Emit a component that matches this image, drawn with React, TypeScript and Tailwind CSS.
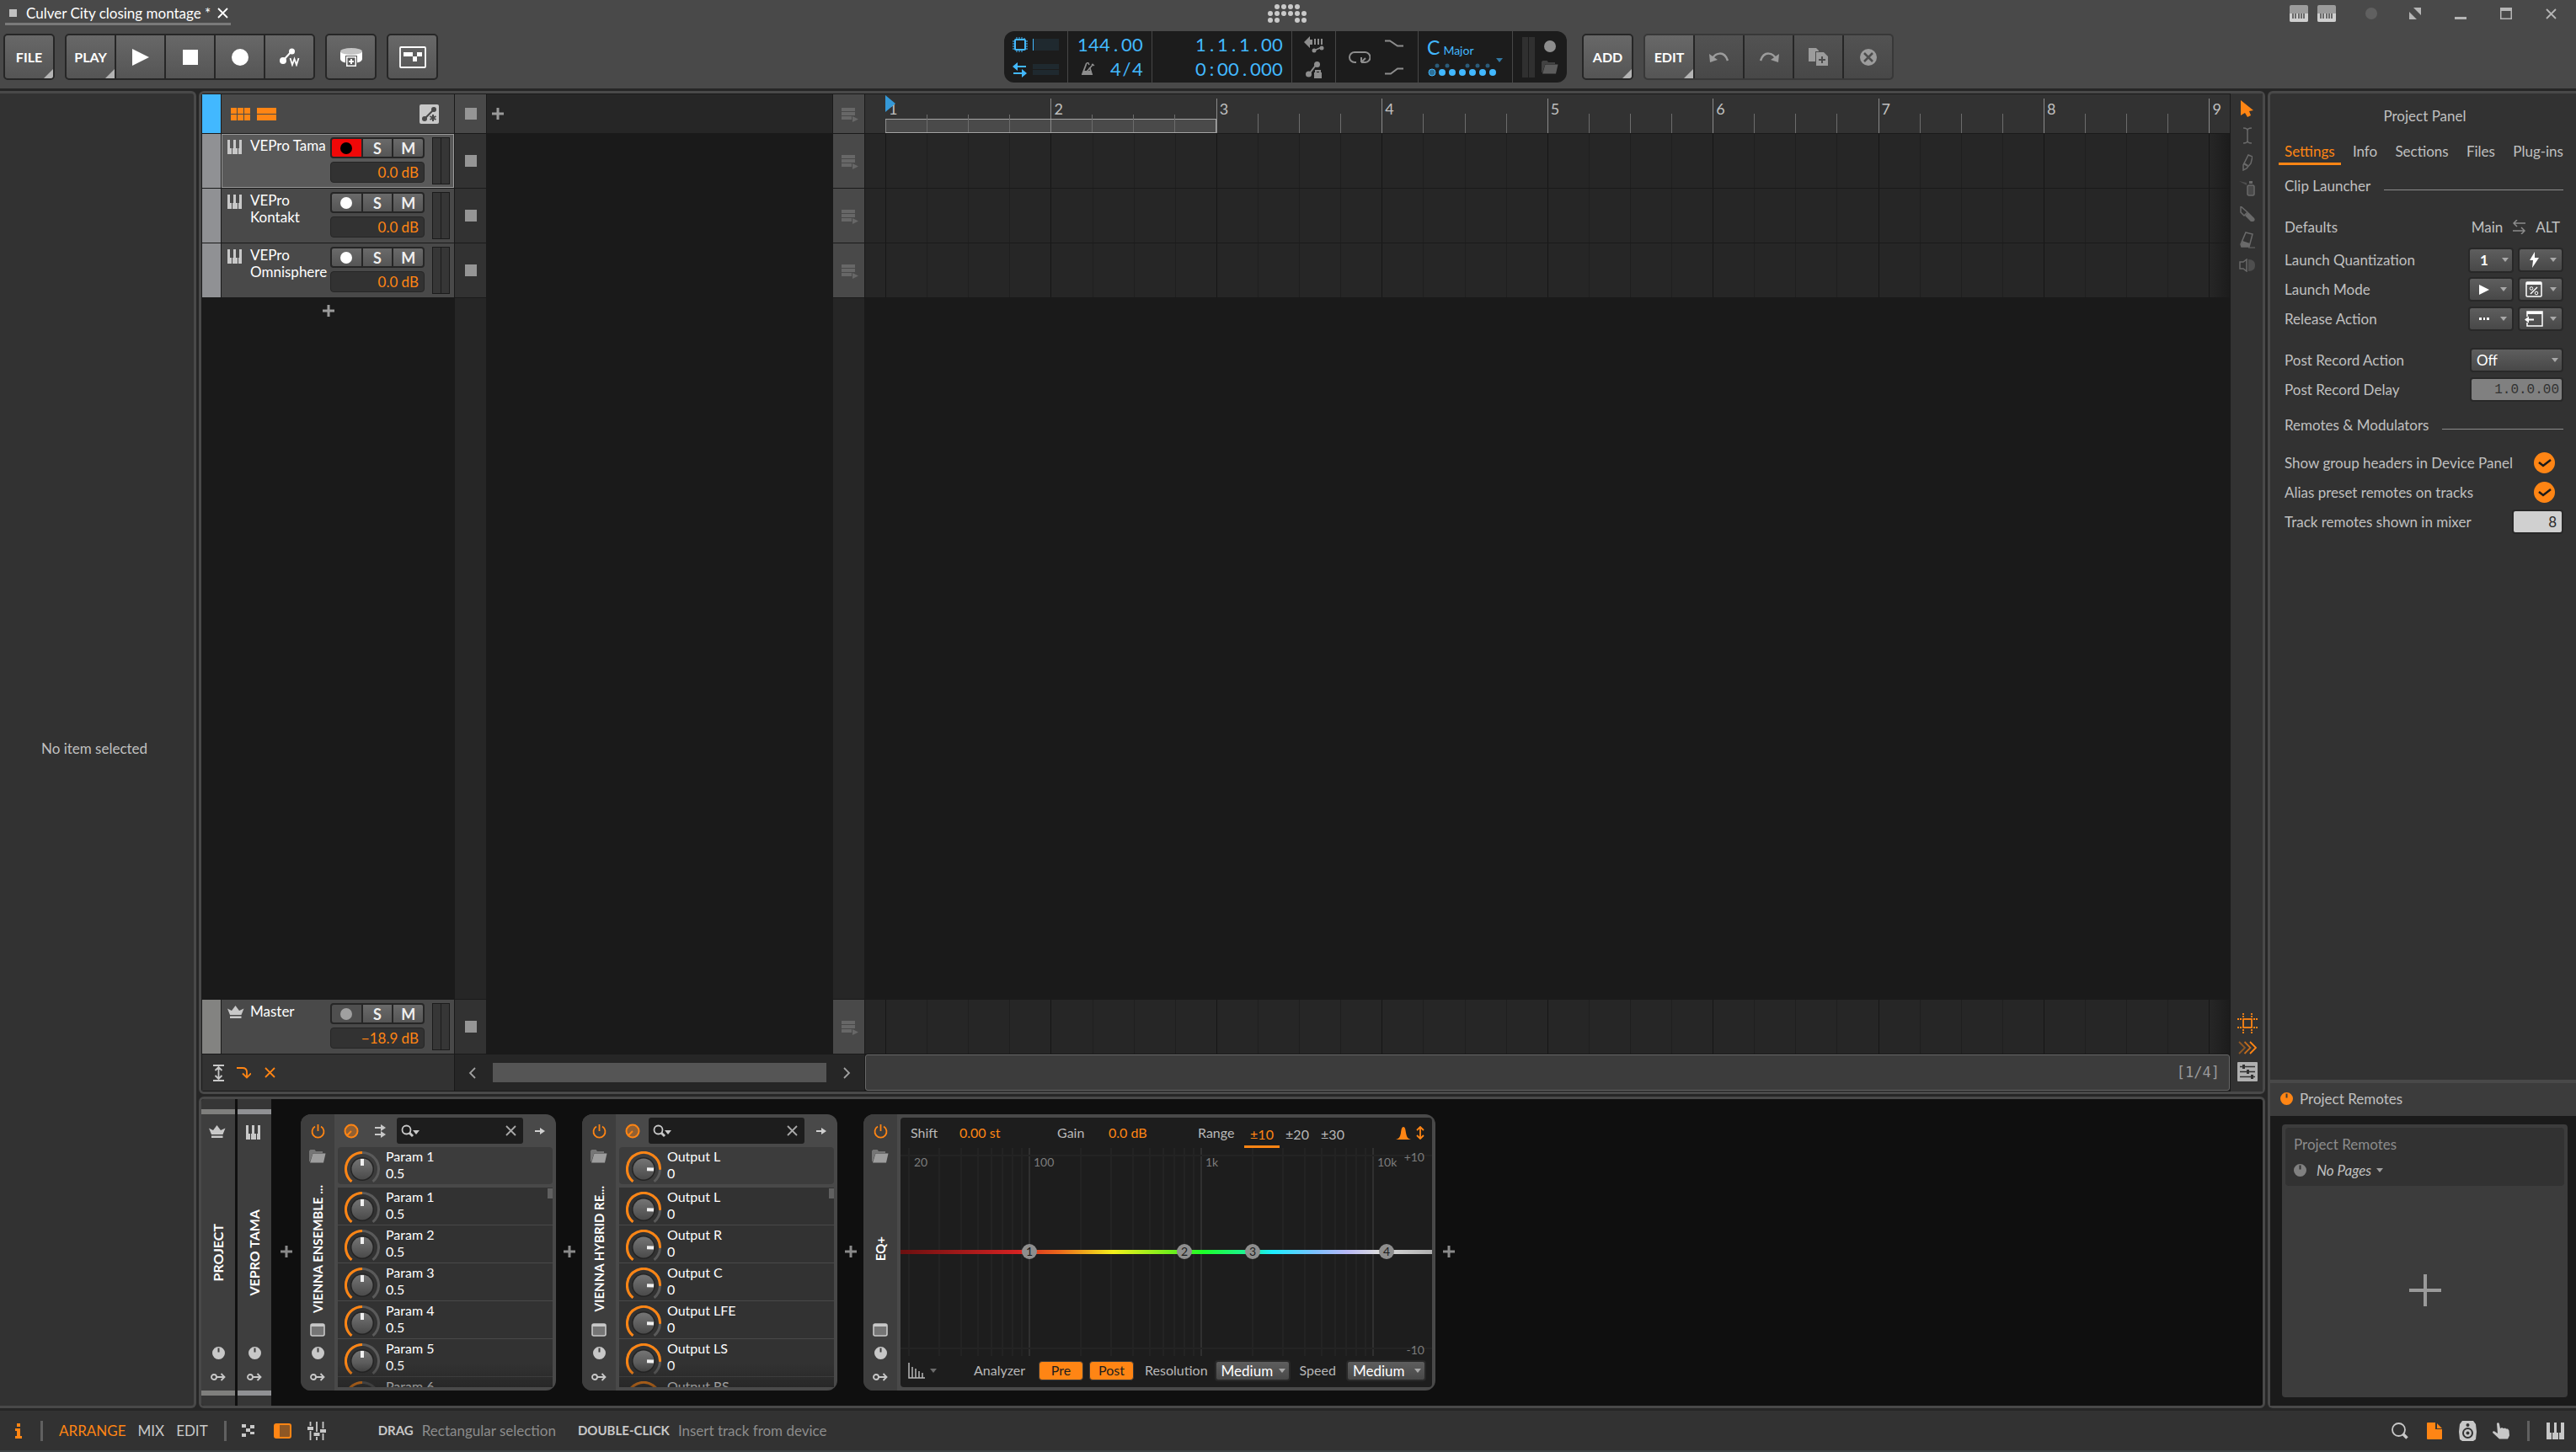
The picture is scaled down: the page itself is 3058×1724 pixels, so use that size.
import { useState } from "react";
import type { ReactNode } from "react";

type IconProps = { className?: string };

function Svg({
  w,
  h,
  className = "",
  children,
}: {
  w: number;
  h: number;
  className?: string;
  children: ReactNode;
}) {
  return (
    <svg
      width={w}
      height={h}
      viewBox={`0 0 ${w} ${h}`}
      fill="currentColor"
      aria-hidden="true"
      className={`shrink-0 ${className}`}
    >
      {children}
    </svg>
  );
}

const PianoIcon = ({ className }: IconProps) => (
  <Svg w={18} h={17} className={className}>
    <path d="M0 0h3v10h2v7H0zM7 0h3v10h2v7H6v-7h1zM14 0h3v17h-4v-7h1z" />
  </Svg>
);

const CrownIcon = ({ className }: IconProps) => (
  <Svg w={20} h={15} className={className}>
    <path d="M0 3.500 5 6l4.500-6L14 6l5.500-2.500L16.500 11H3z" />
    <path d="M3 12.500h13.500V15H3z" />
  </Svg>
);

const DialIcon = ({ className }: IconProps) => (
  <Svg w={15} h={15} className={className}>
    <path
      fillRule="evenodd"
      d="M7.500 0a7.500 7.500 0 1 1 0 15 7.500 7.500 0 0 1 0-15zM6.500 1.500v5h2v-5z"
    />
  </Svg>
);

const RouteIcon = ({ className }: IconProps) => (
  <Svg w={18} h={10} className={className}>
    <g fill="none" stroke="currentColor" strokeWidth="1.800">
      <circle cx="4" cy="5" r="3" />
      <path d="M7 5h10M12.500 1l4 4-4 4" />
    </g>
  </Svg>
);

const PowerIcon = ({ className }: IconProps) => (
  <Svg w={17} h={18} className={className}>
    <path
      d="M8.500 1v8M5 3.500a7 7 0 1 0 7 0"
      fill="none"
      stroke="currentColor"
      strokeWidth="1.800"
    />
  </Svg>
);

const FolderIcon = ({ className }: IconProps) => (
  <Svg w={20} h={16} className={className}>
    <path d="M0 1.500 1.500 0h5L8 2h8v2H4.500L1 14H0z" opacity="0.600" />
    <path d="M4.500 4.500h15L17 15.500H1z" />
  </Svg>
);

const WindowIcon = ({ className }: IconProps) => (
  <Svg w={18} h={16} className={className}>
    <rect x="1" y="1" width="16" height="14" rx="2" fillOpacity="0.400" stroke="currentColor" strokeWidth="1.600" />
    <path d="M1 1h16v3H1z" />
  </Svg>
);

const PlusIcon = ({ className }: IconProps) => (
  <Svg w={14} h={14} className={className}>
    <path d="M5.500 0h3v5.500H14v3H8.500V14h-3V8.500H0v-3h5.500z" />
  </Svg>
);

const CloseIcon = ({ className }: IconProps) => (
  <Svg w={13} h={13} className={className}>
    <path d="M1 1l11 11M12 1L1 12" fill="none" stroke="currentColor" strokeWidth="1.800" />
  </Svg>
);

const CaretIcon = ({ className }: IconProps) => (
  <Svg w={8} h={5} className={className}>
    <path d="M0 0h8L4 5z" />
  </Svg>
);

const ChipIcon = () => (
  <Svg w={18} h={18} className="text-[#42b8ff]">
    <rect x="3" y="3" width="12" height="12" rx="1" fill="none" stroke="currentColor" strokeWidth="2" />
    <path
      d="M5 0v3M8 0v3M11 0v3M14 1v2M5 15v3M8 15v3M11 15v3M0 5h3M0 8h3M0 11h3M0 14h3M15 5h3M15 8h3M15 11h3M15 14h3"
      stroke="currentColor"
      strokeWidth="1"
    />
  </Svg>
);

const SwapIcon = () => (
  <Svg w={17} h={18} className="text-[#42b8ff]">
    <path d="M0 5l6-5v4h10v2H6v4zM17 13l-6-5v4H1v2h10v4z" />
  </Svg>
);

const ListPlayIcon = () => (
  <Svg w={20} h={17} className="text-[#676767]">
    <path d="M0 0h16v4H0zM0 5h16v4H0zM0 10h12v4H0zM13 10l7 3.500-7 3.500z" />
  </Svg>
);

const SearchCaret = () => (
  <Svg w={22} h={16} className="text-[#c8c8c8]">
    <circle cx="6.500" cy="6.500" r="5" fill="none" stroke="currentColor" strokeWidth="1.800" />
    <path d="M10 10l4 4" stroke="currentColor" strokeWidth="3" />
    <path d="M14 7h8l-4 5z" />
  </Svg>
);

// ---------- title bar + transport ----------

function BrandDots() {
  const rows = [
    [1, 2, 3, 4],
    [0, 1, 2, 3, 4, 5],
    [0, 1, 4, 5],
  ];
  return (
    <Svg w={48} h={24} className="text-[#c9c9c9]">
      {rows.map((cols, y) =>
        cols.map((x) => <circle key={`${x}-${y}`} cx={4 + x * 8} cy={4 + y * 8} r="3" />)
      )}
    </Svg>
  );
}

function TitleBar() {
  return (
    <div className="grid h-[37px] grid-cols-[1fr_auto_1fr] items-start pr-0.5">
      <div className="ml-1.5 flex h-[30px] w-[268px] items-center border-b-[3px] border-[#7a7a7a] pl-[5px] pt-1 text-white">
        <span className="mr-[11px] size-[9px] bg-[#c0c0c0]" />
        <span className="text-[17px]">Culver City closing montage *</span>
        <button aria-label="Close project" className="ml-auto mr-[3px]">
          <CloseIcon />
        </button>
      </div>
      <div className="pt-1">
        <BrandDots />
      </div>
      <div className="flex h-8 items-center justify-end pr-[21px] text-[#b5b5b5]">
        {[0, 1].map((i) => (
          <Svg key={i} w={22} h={20} className="mr-[11px]">
            <rect width="22" height="20" rx="2" fill="#9b9b9b" />
            <path d="M0 10h22v8a2 2 0 0 1-2 2H2a2 2 0 0 1-2-2z" fill="#cfcfcf" />
            <path d="M4 10v6M7 10v6M11 10v6M14 10v6M17 10v6" stroke="#4a4a4a" strokeWidth="1.500" />
          </Svg>
        ))}
        <span className="ml-6 mr-[38px] size-[14px] rounded-full bg-[#606060]" />
        <button aria-label="Full screen" className="mr-10">
          <Svg w={14} h={14}>
            <path d="M5 0h9v9zM0 5v9h9z" />
          </Svg>
        </button>
        <button aria-label="Minimize" className="mr-10">
          <Svg w={14} h={14}>
            <path d="M0 11h14v3H0z" />
          </Svg>
        </button>
        <button aria-label="Maximize" className="mr-10">
          <Svg w={14} h={14}>
            <path fillRule="evenodd" d="M0 0h14v14H0zM1.500 4v8.500h11V4z" />
          </Svg>
        </button>
        <button aria-label="Close window">
          <CloseIcon />
        </button>
      </div>
    </div>
  );
}

function ToolGroup({ children, dim }: { children: ReactNode; dim?: boolean }) {
  return (
    <div
      className={`flex h-[55px] overflow-hidden rounded-[5px] border-2 bg-[#262626] ${
        dim ? "border-[#383838]" : "border-[#262626]"
      }`}
    >
      {children}
    </div>
  );
}

function ToolButton({
  label,
  text,
  dim,
  children,
}: {
  label: string;
  text?: boolean;
  dim?: boolean;
  children?: ReactNode;
}) {
  return (
    <button
      aria-label={label}
      className={`relative mr-0.5 flex w-[57px] items-center justify-center text-[16px] font-bold last:mr-0 ${
        dim
          ? "bg-linear-to-b from-[#525252] to-[#484848] text-[#9c9c9c]"
          : "bg-linear-to-b from-[#686868] to-[#555555] text-white"
      }`}
    >
      {text ? label : children}
      {text && (
        <Svg w={11} h={11} className="absolute bottom-0 right-0 text-[#b4b4b4]">
          <path d="M11 0v11H0z" />
        </Svg>
      )}
    </button>
  );
}

// every character sits in a cell of the same width, like a counter
function Digits({ value }: { value: string }) {
  return (
    <div className="flex h-[29px] items-center justify-end text-[22px] leading-none">
      {value.split("").map((c, i) => (
        <span key={i} className="w-[13px] text-center">
          {c}
        </span>
      ))}
    </div>
  );
}

function TransportDisplay() {
  return (
    <div className="flex h-[61px] overflow-hidden rounded-[12px] bg-[#1c1c1c] text-[#42b8ff]">
      <div className="grid w-[76px] grid-cols-[18px_31px] content-center items-center gap-x-1.5 gap-y-3 border-r border-[#464646] pl-[10px]">
        <ChipIcon />
        <div className="h-[14px] border-l border-[#42b8ff] bg-[#1f292f]" />
        <SwapIcon />
        <div>
          <div className="h-1.5 bg-[#1f292f]" />
          <div className="mt-px h-1.5 bg-[#1f292f]" />
        </div>
      </div>
      <div className="w-[100px] border-r border-[#464646] pr-[10px] pt-px">
        <Digits value="144.00" />
        <div className="flex items-center justify-between pl-4">
          <Svg w={16} h={16} className="text-[#8d8d8d]">
            <path d="M5.500 2 1 14h11L9.500 6" fill="none" stroke="currentColor" strokeWidth="1.800" />
            <path d="M2 10h9.500l1 5H.500z" />
            <path d="M5 2l2.500-2L9 3M6 11l8-9M12 2l3 2" fill="none" stroke="currentColor" strokeWidth="1.500" />
          </Svg>
          <Digits value="4/4" />
        </div>
      </div>
      <div className="w-[166px] border-r border-[#464646] pr-[10px] pt-px">
        <Digits value="1.1.1.00" />
        <Digits value="0:00.000" />
      </div>
      <div className="flex w-[52px] flex-col items-center justify-center gap-[10px] border-r border-[#464646] text-[#8d8d8d]">
        <Svg w={24} h={20}>
          <path d="M0 7l7-7v4h3v6H7v4zM12 3h2v7h-2zM16 3h2v7h-2zM20 3h2v7h-2z" />
          <path d="M12 17l9-4" stroke="currentColor" strokeWidth="1.500" />
          <circle cx="12" cy="17" r="2.500" />
          <circle cx="21" cy="14" r="2.500" />
        </Svg>
        <Svg w={20} h={20}>
          <path d="M4 15L13 3" stroke="currentColor" strokeWidth="2" />
          <circle cx="3.500" cy="15" r="3.500" />
          <circle cx="13.500" cy="3.500" r="3.500" />
          <path fillRule="evenodd" d="M10 13h1v-3h7v3h1v7h-9zM13 12v1h3v-1z" />
        </Svg>
      </div>
      <div className="flex w-[98px] items-center gap-[17px] border-r border-[#464646] pl-[15px] text-[#8d8d8d]">
        <Svg w={26} h={16}>
          <path
            d="M9 14H7A6 6 0 0 1 7 2h12a6 6 0 0 1 1 12h-5M15 14l5-5M15 14V8"
            fill="none"
            stroke="currentColor"
            strokeWidth="2"
          />
        </Svg>
        <div className="flex flex-col gap-6">
          <Svg w={22} h={9}>
            <path d="M0 1.500h6l9 6h7" fill="none" stroke="currentColor" strokeWidth="2" />
          </Svg>
          <Svg w={22} h={9}>
            <path d="M0 7.500h7l8-6h7" fill="none" stroke="currentColor" strokeWidth="2" />
          </Svg>
        </div>
      </div>
      <div className="w-[112px] border-r border-[#464646] pl-[10px] pt-0.5">
        <div className="flex h-7 items-baseline gap-1">
          <span className="text-[23px]">C</span>
          <span className="text-[14px]">Major</span>
        </div>
        <Svg w={92} h={26}>
          <path d="M82 2h8l-4 5z" opacity="0.600" />
          {[12, 24, 48, 60, 72].map((x) => (
            <circle key={x} cx={x} cy="11" r="2.500" fill="#2b5b78" />
          ))}
          <circle cx="6" cy="19" r="4" fill="#2d7098" stroke="#42b8ff" />
          {[18, 30, 42, 54, 66, 78].map((x) => (
            <circle key={x} cx={x} cy="19" r="4" />
          ))}
        </Svg>
      </div>
      <div className="flex w-[64px] items-center pl-[11px]">
        <div className="mr-px h-12 w-[7px] bg-[#303030]" />
        <div className="mr-2 h-12 w-[7px] bg-[#303030]" />
        <div className="flex flex-col items-center gap-[10px]">
          <span className="size-[14px] rounded-full bg-[#8d8d8d]" />
          <FolderIcon className="text-[#5c5c5c]" />
        </div>
      </div>
    </div>
  );
}

function Toolbar() {
  return (
    <div className="grid h-[61px] grid-cols-[1fr_auto_1fr] items-center pr-1.5">
      <div className="flex gap-3 pl-1">
        <ToolGroup>
          <ToolButton label="FILE" text />
        </ToolGroup>
        <ToolGroup>
          <ToolButton label="PLAY" text />
          <ToolButton label="Start">
            <Svg w={20} h={20}>
              <path d="M0 0l20 10L0 20z" />
            </Svg>
          </ToolButton>
          <ToolButton label="Stop">
            <span className="size-[18px] bg-white" />
          </ToolButton>
          <ToolButton label="Record">
            <span className="size-5 rounded-full bg-white" />
          </ToolButton>
          <ToolButton label="Write automation">
            <Svg w={24} h={22}>
              <path d="M4 15L14 4" stroke="currentColor" strokeWidth="2" />
              <circle cx="4" cy="15" r="4" />
              <circle cx="14.500" cy="4" r="3.500" />
              <path
                d="M12.500 12l2.500 8 2.500-7 2.500 7 2.500-8"
                fill="none"
                stroke="currentColor"
                strokeWidth="1.800"
              />
            </Svg>
          </ToolButton>
        </ToolGroup>
        <ToolGroup>
          <ToolButton label="Add to library">
            <Svg w={26} h={22}>
              <path d="M0 5v8c0 3 5 5 13 5s13-2 13-5V5z" />
              <ellipse cx="13" cy="4" rx="13" ry="4" fill="#c4c4c4" />
              <path d="M6 9h14v13H6z" fill="#5a5a5a" />
              <path fillRule="evenodd" d="M7 10h12v12H7zM8.500 11.500v9h9v-9z" />
              <path d="M12 13h2v2h2v2h-2v2h-2v-2h-2v-2h2z" />
            </Svg>
          </ToolButton>
        </ToolGroup>
        <ToolGroup>
          <ToolButton label="Patterns">
            <Svg w={32} h={26}>
              <rect x="1" y="1" width="30" height="24" rx="1" fill="none" stroke="currentColor" strokeWidth="1.800" />
              <path d="M5 7h11v5H5zM16 12h5v6h-5zM21 7h6v5h-6z" />
            </Svg>
          </ToolButton>
        </ToolGroup>
      </div>
      <TransportDisplay />
      <div className="flex gap-3 pl-[18px]">
        <ToolGroup>
          <ToolButton label="ADD" text />
        </ToolGroup>
        <ToolGroup dim>
          <ToolButton label="EDIT" text />
          <ToolButton label="Undo" dim>
            <Svg w={24} h={14}>
              <path d="M3 10C7 1 18-1 22 11" fill="none" stroke="currentColor" strokeWidth="2.500" />
              <path d="M0 3l1 10 9-3z" />
            </Svg>
          </ToolButton>
          <ToolButton label="Redo" dim>
            <Svg w={24} h={14}>
              <path d="M21 10C17 1 6-1 2 11" fill="none" stroke="currentColor" strokeWidth="2.500" />
              <path d="M24 3l-1 10-9-3z" />
            </Svg>
          </ToolButton>
          <ToolButton label="Duplicate" dim>
            <Svg w={23} h={21}>
              <path d="M0 0h9l3 3v1H8v12H0z" />
              <path fillRule="evenodd" d="M9 5h9l5 5v11H9zM15 10v3h-3v2h3v3h2v-3h3v-2h-3v-3z" />
            </Svg>
          </ToolButton>
          <ToolButton label="Delete" dim>
            <Svg w={20} h={20}>
              <circle cx="10" cy="10" r="10" />
              <path d="M5 5l10 10M15 5L5 15" stroke="#4d4d4d" strokeWidth="2.500" />
            </Svg>
          </ToolButton>
        </ToolGroup>
      </div>
    </div>
  );
}

// ---------- arranger ----------

type Track = { name: string; volume: string; armed?: boolean; selected?: boolean; master?: boolean };

const tracks: Track[] = [
  { name: "VEPro Tama", volume: "0.0 dB", armed: true, selected: true },
  { name: "VEPro Kontakt", volume: "0.0 dB" },
  { name: "VEPro Omnisphere", volume: "0.0 dB" },
];

const masterTrack: Track = { name: "Master", volume: "−18.9 dB", master: true };

function TrackHeader({ track }: { track: Track }) {
  const [armed, setArmed] = useState(!!track.armed);
  return (
    <div className="flex h-16 gap-px">
      <div className={`w-[22px] ${track.master ? "bg-[#838381]" : "bg-[#909194]"}`} />
      <div
        className={`flex flex-1 items-start border ${
          track.selected ? "border-[#9a9a9a] bg-[#595959]" : "border-[#494949] bg-[#494949]"
        }`}
      >
        <div className="flex w-[33px] pl-1.5 pt-1.5 text-[#c8c8c8]">
          {track.master ? <CrownIcon /> : <PianoIcon />}
        </div>
        <div className="w-[95px] whitespace-normal pt-[3px] text-[17px] leading-5 text-white">{track.name}</div>
        <div className="w-[112px] pt-[3px]">
          <div className="flex h-[25px] gap-0.5 rounded-[4px] border-2 border-[#262626] bg-[#262626] text-[18px] leading-none font-bold text-[#f0f0f0]">
            <button
              aria-label={`Arm ${track.name}`}
              onClick={() => setArmed(!armed)}
              className={`flex flex-1 items-center justify-center rounded-l-[2px] ${
                armed ? "bg-[#f00808]" : track.master ? "bg-[#4f4f4f]" : "bg-linear-to-b from-[#6a6a6a] to-[#555555]"
              }`}
            >
              <span
                className={`size-[14px] rounded-full ${
                  armed ? "bg-black" : track.master ? "bg-[#a0a0a0]" : "bg-white"
                }`}
              />
            </button>
            <button className="flex flex-1 items-center justify-center bg-linear-to-b from-[#6a6a6a] to-[#555555]">
              S
            </button>
            <button className="flex flex-1 items-center justify-center rounded-r-[2px] bg-linear-to-b from-[#6a6a6a] to-[#555555]">
              M
            </button>
          </div>
          <div className="mt-1 flex h-[25px] items-center justify-end rounded-[4px] border border-[#262626] bg-[#323232] pr-1.5 text-[17px] leading-none text-[#ff8514]">
            {track.volume}
          </div>
        </div>
        <div className="ml-[9px] mt-[3px] flex h-14 gap-px border border-[#1b1b1b] bg-[#1b1b1b]">
          <div className="w-[9px] bg-[#363636]" />
          <div className="w-[9px] bg-[#363636]" />
        </div>
      </div>
    </div>
  );
}

function StopCell({ header }: { header?: boolean }) {
  return (
    <button
      aria-label="Stop clips"
      className={`flex items-center justify-center ${header ? "h-[46px] bg-[#494949]" : "h-16 bg-[#323232]"}`}
    >
      <span className="size-[14px] bg-[#959595]" />
    </button>
  );
}

function SwitchCell({ header }: { header?: boolean }) {
  return (
    <button
      aria-label="Switch playback to arranger"
      className={`flex items-center justify-center bg-[#494949] pl-0.5 pt-0.5 ${header ? "h-[46px]" : "h-16"}`}
    >
      <ListPlayIcon />
    </button>
  );
}

const bars = [1, 2, 3, 4, 5, 6, 7, 8, 9];

function Ruler() {
  return (
    <div className="flex h-[46px] bg-[#323232]">
      <div className="w-6" />
      <div className="grid flex-1 grid-cols-[repeat(8,8fr)_1fr]">
        {bars.map((bar) => (
          <div key={bar} className="relative flex min-w-0 flex-col">
            <div
              className={`mt-[5px] h-6 border-l pl-[3px] pt-px text-[18px] leading-[22px] ${
                bar === 1 ? "border-transparent" : "border-[#8a8a8a]"
              } text-[#c0c0c0]`}
            >
              {bar}
            </div>
            {bar < 9 ? (
              <div
                className={`flex flex-1 ${bar < 3 ? "border-y border-[#a5a5a5] bg-[#4a4a4a]" : ""} ${
                  bar === 2 ? "border-r" : ""
                }`}
              >
                <div className="flex-1 border-l border-[#8a8a8a]" />
                <div className="-mt-1.5 flex-1 border-l border-[#6c6c6c]" />
                <div className="-mt-1.5 flex-1 border-l border-[#6c6c6c]" />
                <div className="-mt-1.5 flex-1 border-l border-[#6c6c6c]" />
              </div>
            ) : (
              <div className="flex-1 border-l border-[#8a8a8a]" />
            )}
            {bar === 1 && (
              <Svg w={12} h={20} className="absolute left-0 top-px text-[#3599d8]">
                <path d="M0 0l12 10L0 20z" />
              </Svg>
            )}
          </div>
        ))}
      </div>
    </div>
  );
}

function TimelineRow() {
  return (
    <div className="flex h-16 bg-[#262626]">
      <div className="w-6" />
      <div className="grid flex-1 grid-cols-[repeat(8,8fr)_1fr]">
        {bars.map((bar) =>
          bar === 9 ? (
            <div key={bar} className="border-l border-[#161616] bg-linear-to-r from-[#262626] to-[#1c1c1c]" />
          ) : (
            <div key={bar} className="flex">
              <div className="flex-1 border-l border-[#161616]" />
              <div className="flex-1 border-l border-[#1f1f1f]" />
              <div className="flex-1 border-l border-[#1f1f1f]" />
              <div className="flex-1 border-l border-[#1f1f1f]" />
            </div>
          )
        )}
      </div>
    </div>
  );
}

function ToolPalette() {
  return (
    <div className="flex w-[38px] flex-col items-center justify-between bg-[#323232] pb-3 pl-px pt-2 text-[#6a6a6a]">
      <div className="flex flex-col items-center gap-3">
        <Svg w={15} h={20} className="text-[#ff8514]">
          <path d="M0 0l15 12-5 1 2 5-4 2-3-5-5 3z" />
        </Svg>
        <Svg w={10} h={20}>
          <path
            d="M0 1c3 0 5 1 5 3 0-2 2-3 5-3M5 4v12M0 19c3 0 5-1 5-3 0 2 2 3 5 3"
            fill="none"
            stroke="currentColor"
            strokeWidth="1.500"
          />
        </Svg>
        <Svg w={12} h={20}>
          <path d="M7 1l5 2-2 8-5 6-4 2V13z" fill="none" stroke="currentColor" strokeWidth="1.500" />
          <path d="M1 12l5 3 1-2-5-3z" />
        </Svg>
        <Svg w={20} h={18}>
          <path d="M0 0l9 2v3z" opacity="0.500" />
          <path d="M12 0h4v3h-4z" />
          <rect x="10" y="5" width="8" height="12" rx="2" fill="#4a4a4a" stroke="currentColor" strokeWidth="1.500" />
        </Svg>
        <Svg w={18} h={18}>
          <path d="M1 0l8 7-4 4-4-4z" fill="none" stroke="currentColor" strokeWidth="1.500" />
          <path d="M6 11l4-4 7 7c2 3-1 5-4 4z" />
        </Svg>
        <Svg w={18} h={20}>
          <path d="M7 1l8 2-4 15H2l-1-3z" fill="none" stroke="currentColor" strokeWidth="1.500" />
          <path d="M3 11l9 3-1 4H1z" />
          <path d="M10 19h8" stroke="currentColor" />
        </Svg>
        <Svg w={20} h={16}>
          <path d="M1 4h4l4-3v14l-4-3H1z" fill="none" stroke="currentColor" strokeWidth="1.500" />
          <path d="M11 1c6 0 8 3 8 7s-2 7-8 7z" opacity="0.500" />
        </Svg>
      </div>
      <div className="flex flex-col items-center gap-[9px] text-[#ff8514]">
        <Svg w={24} h={24}>
          <rect x="7" y="7" width="10" height="10" fill="none" stroke="currentColor" strokeWidth="1.800" />
          <path
            d="M7 5V0M17 5V0M7 19v5M17 19v5M5 7H0M5 17H0M19 7h5M19 17h5"
            stroke="currentColor"
            strokeWidth="1.800"
            strokeDasharray="2 1"
          />
        </Svg>
        <Svg w={22} h={16}>
          <g fill="none" stroke="currentColor" strokeWidth="1.800">
            <path d="M1 1l7 7-7 7" opacity="0.450" />
            <path d="M7.500 1l7 7-7 7" opacity="0.700" />
            <path d="M14 1l7 7-7 7" />
          </g>
        </Svg>
        <Svg w={24} h={23} className="text-[#b0b0b0]">
          <rect width="24" height="23" rx="1" />
          <path d="M3 5.500h18M3 11.500h18M3 17.500h18" stroke="#323232" strokeWidth="1.500" />
          <path d="M6 3h3v5H6zM11 9h3v5h-3zM16 15h3v5h-3z" fill="#323232" />
        </Svg>
      </div>
    </div>
  );
}

function Arranger() {
  return (
    <section className="flex min-h-0 flex-1 rounded-[6px] border-[3px] border-[#494949] bg-[#1a1a1a] pl-px">
      <div className="flex min-w-0 flex-1 flex-col gap-px py-px pr-px">
        <div className="flex min-h-0 flex-1 gap-px">
          <div className="flex w-[299px] flex-col gap-px">
            <div className="flex h-[46px] gap-px">
              <div className="w-[22px] bg-[#42b8ff]" />
              <div className="flex flex-1 items-center gap-2 bg-[#494949] pl-[11px] pr-[18px]">
                <button aria-label="Show clip launcher" className="text-[#ff8514]">
                  <Svg w={23} h={15}>
                    <path d="M0 0h7v7H0zM8 0h7v7H8zM16 0h7v7h-7zM0 8h7v7H0zM8 8h7v7H8zM16 8h7v7h-7z" />
                  </Svg>
                </button>
                <button aria-label="Show arranger timeline" className="text-[#ff8514]">
                  <Svg w={23} h={15}>
                    <path d="M0 0h23v7H0zM0 8h23v7H0z" />
                  </Svg>
                </button>
                <button aria-label="Automation override" className="ml-auto text-[#c8c8c8]">
                  <Svg w={23} h={23}>
                    <rect width="23" height="23" rx="2" />
                    <g stroke="#494949" strokeWidth="2">
                      <path d="M6 17L17 6M16 12v8M12.500 14l7 4M19.500 14l-7 4" />
                    </g>
                    <circle cx="6" cy="17" r="3" fill="#494949" />
                    <circle cx="17" cy="6" r="3" fill="#494949" />
                  </Svg>
                </button>
              </div>
            </div>
            {tracks.map((track) => (
              <TrackHeader key={track.name} track={track} />
            ))}
            <div className="flex flex-1 items-start justify-center pt-2">
              <button aria-label="Add track" className="text-[#9a9a9a]">
                <PlusIcon />
              </button>
            </div>
            <TrackHeader track={masterTrack} />
          </div>

          <div className="flex w-[37px] flex-col gap-px">
            <StopCell header />
            {tracks.map((track) => (
              <StopCell key={track.name} />
            ))}
            <div className="flex-1 bg-[#262626]" />
            <StopCell />
          </div>

          <div className="w-[410px]">
            <div className="flex h-[46px] items-center bg-[#262626] pl-1.5 text-[#9a9a9a]">
              <button aria-label="Add scene">
                <PlusIcon />
              </button>
            </div>
          </div>

          <div className="flex w-[37px] flex-col gap-px">
            <SwitchCell header />
            {tracks.map((track) => (
              <SwitchCell key={track.name} />
            ))}
            <div className="flex-1 bg-[#262626]" />
            <SwitchCell />
          </div>

          <div className="flex min-w-0 flex-1 flex-col gap-px">
            <Ruler />
            {tracks.map((track) => (
              <TimelineRow key={track.name} />
            ))}
            <div className="flex-1" />
            <TimelineRow />
          </div>
        </div>

        <div className="flex h-[43px] gap-px">
          <div className="flex w-[299px] items-center gap-3.5 bg-[#323232] pl-3 text-[#ff8514]">
            <Svg w={15} h={20} className="text-[#c8c8c8]">
              <path
                d="M1 1h13M1 19h13M7.500 3v14M3.500 7l4-4 4 4M3.500 13l4 4 4-4"
                fill="none"
                stroke="currentColor"
                strokeWidth="1.800"
              />
            </Svg>
            <Svg w={17} h={15}>
              <path d="M0 2h7c3 0 5 1 5 5v6M7 8.500l5 5 5-5" fill="none" stroke="currentColor" strokeWidth="1.800" />
            </Svg>
            <CloseIcon className="ml-0.5" />
          </div>
          <div className="flex w-[486px] items-center bg-[#262626] px-4 text-[#a0a0a0]">
            <Svg w={9} h={14}>
              <path d="M8 1L2 7l6 6" fill="none" stroke="currentColor" strokeWidth="1.800" />
            </Svg>
            <div className="mx-5 h-[23px] flex-1 bg-[#555555]" />
            <Svg w={9} h={14}>
              <path d="M1 1l6 6-6 6" fill="none" stroke="currentColor" strokeWidth="1.800" />
            </Svg>
          </div>
          <div className="flex flex-1 items-center justify-end rounded-[3px] border border-[#686868] bg-[#3c3c3c] pr-[11px] font-['DejaVu_Sans_Mono',monospace] text-[17px] text-[#9a9a9a]">
            [1/4]
          </div>
        </div>
      </div>
      <ToolPalette />
    </section>
  );
}

// ---------- device panel ----------

function ChainColumn({ label, icon, strip }: { label: string; icon: ReactNode; strip: string }) {
  return (
    <div className="flex w-10 flex-col bg-[#363636] py-3">
      <div className={`h-1.5 ${strip}`} />
      <div className="flex flex-1 flex-col items-center bg-[#3e3e3e] text-[#c8c8c8]">
        <div className="flex h-[60px] items-start pr-0.5 pt-[13px]">{icon}</div>
        <div className="flex flex-1 items-center">
          <span className="rotate-180 text-[16px] leading-5 font-bold text-white [writing-mode:vertical-rl]">
            {label}
          </span>
        </div>
        <div className="flex h-[60px] flex-col items-center gap-4 pt-2">
          <DialIcon />
          <RouteIcon />
        </div>
      </div>
      <div className={`h-1.5 ${strip}`} />
    </div>
  );
}

function DevicePlus({ wide }: { wide?: boolean }) {
  return (
    <button
      aria-label="Add device"
      className={`flex h-[328px] items-center justify-center pb-0.5 text-[#8a8a8a] ${wide ? "w-[35px]" : "w-[31px]"}`}
    >
      <PlusIcon />
    </button>
  );
}

function DeviceFrame({ name, className, children }: { name: string; className: string; children: ReactNode }) {
  return (
    <article className={`flex h-[328px] overflow-hidden rounded-[12px] bg-[#494949] ${className}`}>
      <div className="flex w-10 flex-col items-center bg-[#3e3e3e] text-[#c8c8c8]">
        <div className="flex h-[74px] flex-col items-center gap-[13px] pt-[11px]">
          <button aria-label="Device on/off" className="text-[#ff8514]">
            <PowerIcon />
          </button>
          <FolderIcon className="text-[#9d9d9d]" />
        </div>
        <div className="flex flex-1 items-center">
          <span className="rotate-180 text-[15px] leading-5 font-bold text-white [writing-mode:vertical-rl]">
            {name}
          </span>
        </div>
        <div className="flex h-[82px] flex-col items-center pt-0.5">
          <WindowIcon />
          <DialIcon className="mt-3" />
          <RouteIcon className="mt-4" />
        </div>
      </div>
      {children}
    </article>
  );
}

const polar = (deg: number, r: number) => {
  const a = ((deg - 90) * Math.PI) / 180;
  return `${21 + r * Math.cos(a)} ${21 + r * Math.sin(a)}`;
};

const arc = (from: number, to: number) =>
  `M${polar(from, 19.5)} A19.5 19.5 0 ${to - from > 180 ? 1 : 0} 1 ${polar(to, 19.5)}`;

// angle is measured from the top, the track sweeps from -140 to 140
function Knob({ angle }: { angle: number }) {
  return (
    <Svg w={42} h={38}>
      <defs>
        <linearGradient id="knob" x1="0" y1="0" x2="0" y2="1">
          <stop offset="0" stopColor="#757575" />
          <stop offset="1" stopColor="#4a4a4a" />
        </linearGradient>
      </defs>
      <path d={arc(-140, 140)} fill="none" stroke="#5a5a5a" strokeWidth="3" />
      <path d={arc(-140, angle)} fill="none" stroke="#ff8514" strokeWidth="3" />
      <circle cx="21" cy="21" r="14" fill="#242424" />
      <circle cx="21" cy="21" r="12.5" fill="url(#knob)" />
      <path d="M19 9h4v8h-4z" fill="#f0f0f0" transform={`rotate(${angle} 21 21)`} />
    </Svg>
  );
}

function ParamRow({ name, value, angle }: { name: string; value: string; angle: number }) {
  return (
    <div className="flex gap-[7px] pl-2 text-[16px] leading-5 text-white">
      <div className="pt-[5px]">
        <Knob angle={angle} />
      </div>
      <div className="pt-px">
        <div>{name}</div>
        <div>{value}</div>
      </div>
    </div>
  );
}

function PluginDevice({
  name,
  params,
  value,
  angle,
  mapping,
}: {
  name: string;
  params: string[];
  value: string;
  angle: number;
  mapping?: boolean;
}) {
  return (
    <DeviceFrame name={name} className="w-[303px]">
      <div className="flex min-w-0 flex-1 flex-col gap-1 p-1">
        <div className="flex h-[31px] items-center">
          <span className="flex w-[31px] justify-center text-[#ff8514]">
            <Svg w={18} h={18}>
              <circle cx="9" cy="9" r="7.500" fillOpacity="0.400" stroke="currentColor" strokeWidth="2" />
              <path d="M4 14l5-5" stroke="currentColor" strokeWidth="2" />
            </Svg>
          </span>
          {mapping && (
            <span className="flex w-[35px] justify-center pl-1 text-[#c8c8c8]">
              <Svg w={13} h={16}>
                <path d="M0 3h7V0l6 4-6 4V5H0zM0 11h7V8l6 4-6 4v-3H0z" />
              </Svg>
            </span>
          )}
          <div className="ml-1 flex h-[31px] min-w-0 flex-1 items-center rounded-[3px] bg-[#1d1d1d] pl-[5px] pr-2">
            <SearchCaret />
            <input type="search" aria-label={`Search ${name}`} className="min-w-0 flex-1 bg-transparent outline-none" />
            <CloseIcon className="text-[#a8a8a8]" />
          </div>
          <span className="flex w-[35px] justify-center pl-1 text-[#d0d0d0]">
            <Svg w={12} h={8}>
              <path d="M0 3h6V0l6 4-6 4V5H0z" />
            </Svg>
          </span>
        </div>
        <div className="h-11 overflow-hidden rounded-[4px] bg-[#3c3c3c]">
          <ParamRow name={params[0]} value={value} angle={angle} />
        </div>
        <div className="relative min-h-0 flex-1 overflow-hidden bg-[#323232]">
          {params.map((p) => (
            <div key={p} className="h-[45px] border-b border-[#494949]">
              <ParamRow name={p} value={value} angle={angle} />
            </div>
          ))}
          <div className="absolute right-0 top-px h-3 w-1.5 bg-[#606060]" />
          <div className="absolute inset-x-0 bottom-0 h-7 bg-linear-to-b from-transparent to-[#1d1d1d]/50" />
        </div>
      </div>
    </DeviceFrame>
  );
}

// x of a frequency on the log scale, 204px per decade
const freqX = (hz: number) => Math.round(153 + 204 * Math.log10(hz / 100));

const gridFreqs = [
  20, 30, 40, 50, 60, 70, 80, 90, 100, 200, 300, 400, 500, 600, 700, 800, 900, 1000, 2000, 3000, 4000, 5000, 6000,
  7000, 8000, 9000, 10000,
];

const eqNodes = [
  { n: 1, x: 153 },
  { n: 2, x: 337 },
  { n: 3, x: 418 },
  { n: 4, x: 577 },
];

function EqGraph() {
  return (
    <svg width="631" height="247" viewBox="0 0 631 247" className="block text-[14px]" aria-label="EQ curve">
      <defs>
        <linearGradient id="spectrum" gradientUnits="userSpaceOnUse" x1="0" y1="0" x2="631" y2="0">
          <stop offset="0" stopColor="#6b1010" />
          <stop offset="0.220" stopColor="#d42222" />
          <stop offset="0.300" stopColor="#ec6a1c" />
          <stop offset="0.400" stopColor="#f4f01c" />
          <stop offset="0.520" stopColor="#62ee1c" />
          <stop offset="0.570" stopColor="#1cff2a" />
          <stop offset="0.660" stopColor="#1cf0a0" />
          <stop offset="0.700" stopColor="#1ceeff" />
          <stop offset="0.780" stopColor="#7cc0ff" />
          <stop offset="0.840" stopColor="#b8b8f6" />
          <stop offset="0.900" stopColor="#dcdcdc" />
          <stop offset="1" stopColor="#b0b0b0" />
        </linearGradient>
      </defs>
      {gridFreqs.map((f) => (
        <rect
          key={f}
          x={freqX(f) - 1}
          width="2"
          height="247"
          fill={[100, 1000, 10000].includes(f) ? "#303030" : "#232323"}
        />
      ))}
      <path d="M0 9h631M0 238h631" stroke="#232323" strokeWidth="2" />
      <g fill="#7c7c7c">
        <text x="16" y="22">20</text>
        <text x="158" y="22">100</text>
        <text x="362" y="22">1k</text>
        <text x="566" y="22">10k</text>
        <text x="622" y="16" textAnchor="end">+10</text>
        <text x="622" y="245" textAnchor="end">-10</text>
      </g>
      <rect y="121" width="631" height="5" fill="url(#spectrum)" />
      {eqNodes.map(({ n, x }) => (
        <g key={n}>
          <circle cx={x} cy="123" r="9" fill="#8e8e8e" />
          <text x={x} y="128" textAnchor="middle" fill="#1d1d1d">
            {n}
          </text>
        </g>
      ))}
    </svg>
  );
}

function MiniSelect({ id, className, options }: { id: string; className: string; options: string[] }) {
  return (
    <div className={`grid items-center ${className}`}>
      <select
        id={id}
        className="col-start-1 row-start-1 h-full w-full appearance-none rounded-[4px] border-2 border-[#282828] bg-linear-to-b from-[#5e5e5e] to-[#484848] pl-1.5 text-[17px] leading-none text-white"
      >
        {options.map((o) => (
          <option key={o}>{o}</option>
        ))}
      </select>
      <CaretIcon className="pointer-events-none col-start-1 row-start-1 mr-1.5 justify-self-end text-[#a8a8a8]" />
    </div>
  );
}

function EqDevice() {
  const [range, setRange] = useState("±10");
  return (
    <DeviceFrame name="EQ+" className="w-[679px]">
      <div className="flex flex-1 flex-col p-1">
        <div className="flex-1 overflow-hidden rounded-[4px] bg-[#1d1d1d] text-[16px] text-[#b8b8b8]">
          <div className="flex h-9 items-center pl-3 pr-[9px]">
            <span className="w-[58px]">Shift</span>
            <span className="w-[116px] text-[#ff8514]">0.00 st</span>
            <span className="w-[61px]">Gain</span>
            <span className="w-[106px] text-[#ff8514]">0.0 dB</span>
            <span className="w-[55px]">Range</span>
            {["±10", "±20", "±30"].map((r) => (
              <button
                key={r}
                onClick={() => setRange(r)}
                className={`h-9 w-[42px] border-b-[3px] pt-1.5 ${
                  range === r ? "border-[#ff8514] text-[#ff8514]" : "border-transparent"
                }`}
              >
                {r}
              </button>
            ))}
            <div className="ml-auto flex items-center gap-1.5 text-[#ff8514]">
              <Svg w={18} h={15}>
                <path d="M0 15c4-1 5-3 6-8 .500-4 1-7 3-7s2.500 3 3 7c1 5 2 7 6 8z" />
              </Svg>
              <Svg w={10} h={16}>
                <path d="M5 1v14M1 5l4-4 4 4M1 11l4 4 4-4" fill="none" stroke="currentColor" strokeWidth="1.800" />
              </Svg>
            </div>
          </div>
          <EqGraph />
          <div className="flex h-[34px] items-center pl-[9px] pr-[7px]">
            <Svg w={20} h={19}>
              <path
                d="M1 0v18h19M5 5v13M9 7v11M13 10v8M17 12v6"
                fill="none"
                stroke="currentColor"
                strokeWidth="1.500"
              />
            </Svg>
            <CaretIcon className="ml-1.5 text-[#6c6c6c]" />
            <span className="ml-11">Analyzer</span>
            <button className="ml-4 h-[23px] w-[53px] rounded-[4px] border border-[#3a3a3a] bg-[#ff8514] leading-none text-[#1d1d1d]">
              Pre
            </button>
            <button className="ml-[7px] h-[23px] w-[53px] rounded-[4px] border border-[#3a3a3a] bg-[#ff8514] leading-none text-[#1d1d1d]">
              Post
            </button>
            <label htmlFor="resolution" className="ml-[13px]">
              Resolution
            </label>
            <MiniSelect id="resolution" className="ml-2 h-[25px] w-[90px]" options={["Medium", "Low", "High"]} />
            <label htmlFor="speed" className="ml-[11px]">
              Speed
            </label>
            <MiniSelect id="speed" className="ml-auto h-[25px] w-[95px]" options={["Medium", "Slow", "Fast"]} />
          </div>
        </div>
      </div>
    </DeviceFrame>
  );
}

function DevicePanel() {
  return (
    <section className="flex h-[370px] overflow-hidden rounded-[6px] border-[3px] border-[#494949] bg-[#0f0f0f]">
      <ChainColumn label="PROJECT" icon={<CrownIcon />} strip="bg-[#7f7f7d]" />
      <div className="w-[3px]" />
      <ChainColumn label="VEPRO TAMA" icon={<PianoIcon />} strip="bg-[#909194]" />
      <div className="flex items-start pt-[18px]">
        <DevicePlus wide />
        <PluginDevice
          name="VIENNA ENSEMBLE ..."
          params={["Param 1", "Param 2", "Param 3", "Param 4", "Param 5", "Param 6"]}
          value="0.5"
          angle={0}
          mapping
        />
        <DevicePlus />
        <PluginDevice
          name="VIENNA HYBRID RE..."
          params={["Output L", "Output R", "Output C", "Output LFE", "Output LS", "Output RS"]}
          value="0"
          angle={92}
        />
        <DevicePlus />
        <EqDevice />
        <DevicePlus />
      </div>
    </section>
  );
}

// ---------- project panel ----------

function SectionTitle({ children }: { children: ReactNode }) {
  return (
    <h2 className="mt-[5px] flex h-10 items-center gap-4">
      {children}
      <span className="mt-2 h-px flex-1 bg-[#8c8c8c]" />
    </h2>
  );
}

function IconDropdown({ label, children }: { label: string; children: ReactNode }) {
  return (
    <button
      aria-label={label}
      aria-haspopup="listbox"
      className="flex h-[29px] w-[54px] items-center justify-between rounded-[4px] border-2 border-[#282828] bg-linear-to-b from-[#5e5e5e] to-[#484848] pl-1.5 pr-1.5 text-white"
    >
      <span className="flex w-[22px] justify-center">{children}</span>
      <CaretIcon className="text-[#a8a8a8]" />
    </button>
  );
}

function Check({ id, label }: { id: string; label: string }) {
  const [on, setOn] = useState(true);
  return (
    <div className="flex h-[35px] items-center justify-between pr-[10px]">
      <label htmlFor={id}>{label}</label>
      <div className="grid place-items-center">
        <input
          id={id}
          type="checkbox"
          checked={on}
          onChange={(e) => setOn(e.target.checked)}
          className="col-start-1 row-start-1 size-[25px] appearance-none rounded-full bg-[#555555] checked:bg-[#ff8514]"
        />
        {on && (
          <Svg w={16} h={10} className="pointer-events-none col-start-1 row-start-1 text-[#1a1a1a]">
            <path d="M1 4l5 4 9-7" fill="none" stroke="currentColor" strokeWidth="2.500" />
          </Svg>
        )}
      </div>
    </div>
  );
}

function ProjectPanel() {
  const tabs = ["Settings", "Info", "Sections", "Files", "Plug-ins"];
  const [tab, setTab] = useState("Settings");

  return (
    <aside className="flex w-[366px] flex-col rounded-l-[6px] border-y-[3px] border-l-[3px] border-[#494949] bg-[#323232] text-[17px] text-[#c0c0c0]">
      <h1 className="flex h-14 items-center justify-center pb-0.5 pl-1">Project Panel</h1>
      <div className="flex justify-between pl-[10px] pr-2">
        {tabs.map((t) => (
          <button
            key={t}
            onClick={() => setTab(t)}
            className={`h-[29px] border-b-[3px] px-[7px] ${
              tab === t ? "border-[#ff8514] text-[#ff8514]" : "border-transparent"
            }`}
          >
            {t}
          </button>
        ))}
      </div>
      <div className="flex-1 pl-[17px] pr-[15px]">
        <SectionTitle>Clip Launcher</SectionTitle>
        <div className="mt-[11px] flex h-[35px] items-center">
          <span className="flex-1">Defaults</span>
          <span>Main</span>
          <Svg w={15} h={17} className="mx-3 text-[#8c8c8c]">
            <path d="M15 4H1M5 0L1 4l4 4M0 13h14M10 9l4 4-4 4" fill="none" stroke="currentColor" strokeWidth="1.500" />
          </Svg>
          <span className="pr-1">ALT</span>
        </div>
        <div className="mt-1 flex h-[35px] items-center gap-[5px]">
          <label htmlFor="quantization" className="flex-1">
            Launch Quantization
          </label>
          <div className="grid h-[29px] w-[54px] items-center">
            <select
              id="quantization"
              className="col-start-1 row-start-1 h-full w-full appearance-none rounded-[4px] border-2 border-[#282828] bg-linear-to-b from-[#5e5e5e] to-[#484848] pl-3 text-[17px] font-bold text-white"
            >
              <option>1</option>
              <option>2</option>
              <option>4</option>
            </select>
            <CaretIcon className="pointer-events-none col-start-1 row-start-1 mr-1.5 justify-self-end text-[#a8a8a8]" />
          </div>
          <IconDropdown label="ALT launch quantization">
            <Svg w={12} h={19}>
              <path d="M7 0L1 10h4l-1 9 8-12H7z" />
            </Svg>
          </IconDropdown>
        </div>
        <div className="flex h-[35px] items-center gap-[5px]">
          <span className="flex-1">Launch Mode</span>
          <IconDropdown label="Launch mode">
            <Svg w={12} h={12}>
              <path d="M0 0l12 6-12 6z" />
            </Svg>
          </IconDropdown>
          <IconDropdown label="ALT launch mode">
            <Svg w={20} h={19}>
              <rect x="1" y="1" width="18" height="17" rx="1" fill="none" stroke="currentColor" strokeWidth="1.500" />
              <path d="M1 1h18v3H1z" />
              <path d="M6 15l8-8" stroke="currentColor" strokeWidth="1.500" />
              <circle cx="7" cy="8.500" r="1.800" fill="none" stroke="currentColor" />
              <circle cx="13" cy="14" r="1.800" fill="none" stroke="currentColor" />
            </Svg>
          </IconDropdown>
        </div>
        <div className="flex h-[35px] items-center gap-[5px]">
          <span className="flex-1">Release Action</span>
          <IconDropdown label="Release action">
            <Svg w={12} h={3}>
              <path d="M0 0h3v3H0zM5 0h2v3H5zM9 0h3v3H9z" />
            </Svg>
          </IconDropdown>
          <IconDropdown label="ALT release action">
            <Svg w={22} h={19}>
              <path d="M3 7V1h18v17H3v-4" fill="none" stroke="currentColor" strokeWidth="1.500" />
              <path d="M3 1h18v3H3zM0 10.500l5-4v3h6v2H5v3z" />
            </Svg>
          </IconDropdown>
        </div>
        <div className="mt-3.5 flex h-[35px] items-center justify-between">
          <label htmlFor="post-action">Post Record Action</label>
          <MiniSelect id="post-action" className="h-[29px] w-[111px]" options={["Off", "Play recorded"]} />
        </div>
        <div className="flex h-[35px] items-center justify-between">
          <label htmlFor="post-delay">Post Record Delay</label>
          <input
            id="post-delay"
            disabled
            defaultValue="1.0.0.00"
            className="h-[29px] w-[111px] rounded-[4px] border-2 border-[#282828] bg-[#808080] pr-[3px] text-right font-['Liberation_Mono',monospace] text-[16px] text-[#323232]"
          />
        </div>
        <SectionTitle>Remotes &amp; Modulators</SectionTitle>
        <div className="mt-[7px]">
          <Check id="group-headers" label="Show group headers in Device Panel" />
          <Check id="alias-remotes" label="Alias preset remotes on tracks" />
          <div className="flex h-[35px] items-center justify-between">
            <label htmlFor="mixer-remotes">Track remotes shown in mixer</label>
            <input
              id="mixer-remotes"
              defaultValue="8"
              className="h-[29px] w-[61px] rounded-[4px] border-2 border-[#282828] bg-[#d0d0d0] pr-1.5 text-right text-[17px] text-[#2a2a2a]"
            />
          </div>
        </div>
      </div>

      <div className="flex h-[43px] items-center gap-2 border-t-4 border-[#494949] bg-[#3c3c3c] pb-0.5 pl-3">
        <DialIcon className="text-[#ff8514]" />
        <h2>Project Remotes</h2>
      </div>
      <div className="h-[344px] bg-[#1a1a1a] pb-[10px] pl-3.5 pr-[10px] pt-[10px]">
        <div className="flex h-full flex-col rounded-[4px] bg-[#3c3c3c] p-1">
          <div className="h-[69px] rounded-[4px] bg-[#323232] pl-[10px] pt-1">
            <div className="flex h-[31px] items-center text-[#8c8c8c]">Project Remotes</div>
            <button className="flex h-[31px] items-center italic">
              <DialIcon className="mr-3 text-[#808080]" />
              No Pages
              <CaretIcon className="ml-1.5 text-[#a0a0a0]" />
            </button>
          </div>
          <button aria-label="Add remote page" className="flex flex-1 items-center justify-center text-[#9a9a9a]">
            <Svg w={38} h={38}>
              <path d="M17 0h4v17h17v4H21v17h-4V21H0v-4h17z" />
            </Svg>
          </button>
        </div>
      </div>
    </aside>
  );
}

// ---------- status bar ----------

function StatusBar() {
  return (
    <footer className="flex h-[49px] items-center border-b-2 border-[#3f4346] bg-[#323232] text-[17px] text-[#c8c8c8]">
      <button aria-label="Info" className="ml-[18px] text-[#ff8514]">
        <Svg w={8} h={18}>
          <path d="M2 0h4v4H2zM0 6h6v9h2v3H0v-3h2V9H0z" />
        </Svg>
      </button>
      <span className="ml-[22px] h-6 w-[3px] bg-[#606060]" />
      <button className="ml-[19px] text-[#ff8514]">ARRANGE</button>
      <button className="ml-3.5">MIX</button>
      <button className="ml-3.5">EDIT</button>
      <span className="ml-[19px] h-6 w-[3px] bg-[#606060]" />
      <button aria-label="Note editor" className="ml-[18px]">
        <Svg w={15} h={15}>
          <path d="M0 0h5v4H0zM10 1h5v4h-5zM5 5h5v4H5zM10 9h5v3h-5zM0 11h5v4H0z" />
        </Svg>
      </button>
      <button aria-label="Device panel" className="ml-[23px] text-[#ff8514]">
        <Svg w={21} h={18}>
          <rect x="1" y="1" width="19" height="16" rx="2" fillOpacity="0.450" stroke="currentColor" strokeWidth="2" />
          <path d="M1 1h6v16H1z" />
        </Svg>
      </button>
      <button aria-label="Mixer" className="ml-[19px]">
        <Svg w={22} h={22}>
          <path
            d="M3.500 0v5M3.500 11v11M11 0v12M11 18v4M18.500 0v8M18.500 14v8"
            stroke="currentColor"
            strokeWidth="1.800"
          />
          <path d="M0 6h7v4H0zM7.500 13h7v4h-7zM15 9h7v4h-7z" />
        </Svg>
      </button>
      <span className="ml-[62px] text-[15px] font-bold">DRAG</span>
      <span className="ml-[10px] text-[#8c8c8c]">Rectangular selection</span>
      <span className="ml-[26px] text-[15px] font-bold">DOUBLE-CLICK</span>
      <span className="ml-[10px] text-[#8c8c8c]">Insert track from device</span>

      <div className="ml-auto flex items-center pr-3.5">
        <button aria-label="Browser">
          <Svg w={20} h={20}>
            <circle cx="8.500" cy="8.500" r="7.500" fill="none" stroke="currentColor" strokeWidth="1.800" />
            <path d="M13.500 13.500l5 5" stroke="currentColor" strokeWidth="3.500" />
          </Svg>
        </button>
        <button aria-label="Project" className="ml-[22px] text-[#ff8514]">
          <Svg w={18} h={20}>
            <path d="M0 1a1 1 0 0 1 1-1h9v8h8v11a1 1 0 0 1-1 1H1a1 1 0 0 1-1-1zM12 1l6 6h-6z" />
          </Svg>
        </button>
        <button aria-label="Output monitoring" className="ml-5">
          <Svg w={21} h={24}>
            <path
              fillRule="evenodd"
              d="M4 0h13l3 4 1 9-1 9-3 2H4l-3-2-1-9 1-9zM10.500 3a2 2 0 1 0 0 4 2 2 0 0 0 0-4zM10.500 8a6.500 6.500 0 1 0 0 13 6.500 6.500 0 0 0 0-13z"
            />
            <circle cx="10.500" cy="14.500" r="4.500" />
            <circle cx="10.500" cy="14.500" r="2" fill="#323232" />
          </Svg>
        </button>
        <button aria-label="Mappings" className="ml-[19px]">
          <Svg w={20} h={20}>
            <path d="M5 1c1-1.500 3-1 3 1l1 5 2-1 2 1 2-.500 1 1 2 0 1.500 2 .500 6-2 4H8L0 12c0-2 2-2 3-1l3 2z" />
          </Svg>
        </button>
        <span className="ml-[21px] h-6 w-[3px] bg-[#606060]" />
        <button aria-label="On-screen keyboard" className="ml-5">
          <Svg w={21} h={20}>
            <path d="M0 0h4v12h2v8H0zM9 0h3v12h2v8H7v-8h2zM17 0h4v20h-6v-8h2z" />
          </Svg>
        </button>
      </div>
    </footer>
  );
}

function App() {
  return (
    <div className="flex h-screen w-full flex-col overflow-hidden bg-[#262626] font-[Lato,sans-serif] whitespace-nowrap">
      <header className="h-[105px] bg-[#494949]">
        <TitleBar />
        <Toolbar />
      </header>
      <main className="flex min-h-0 flex-1 gap-[3px] py-[3px]">
        <aside className="flex w-[233px] items-center justify-center rounded-r-[6px] border-y-[3px] border-r-[3px] border-[#494949] bg-[#323232] pb-0.5 pr-1.5 text-[17px] text-[#c0c0c0]">
          No item selected
        </aside>
        <div className="flex min-w-0 flex-1 flex-col gap-[3px]">
          <Arranger />
          <DevicePanel />
        </div>
        <ProjectPanel />
      </main>
      <StatusBar />
    </div>
  );
}

export default App;
